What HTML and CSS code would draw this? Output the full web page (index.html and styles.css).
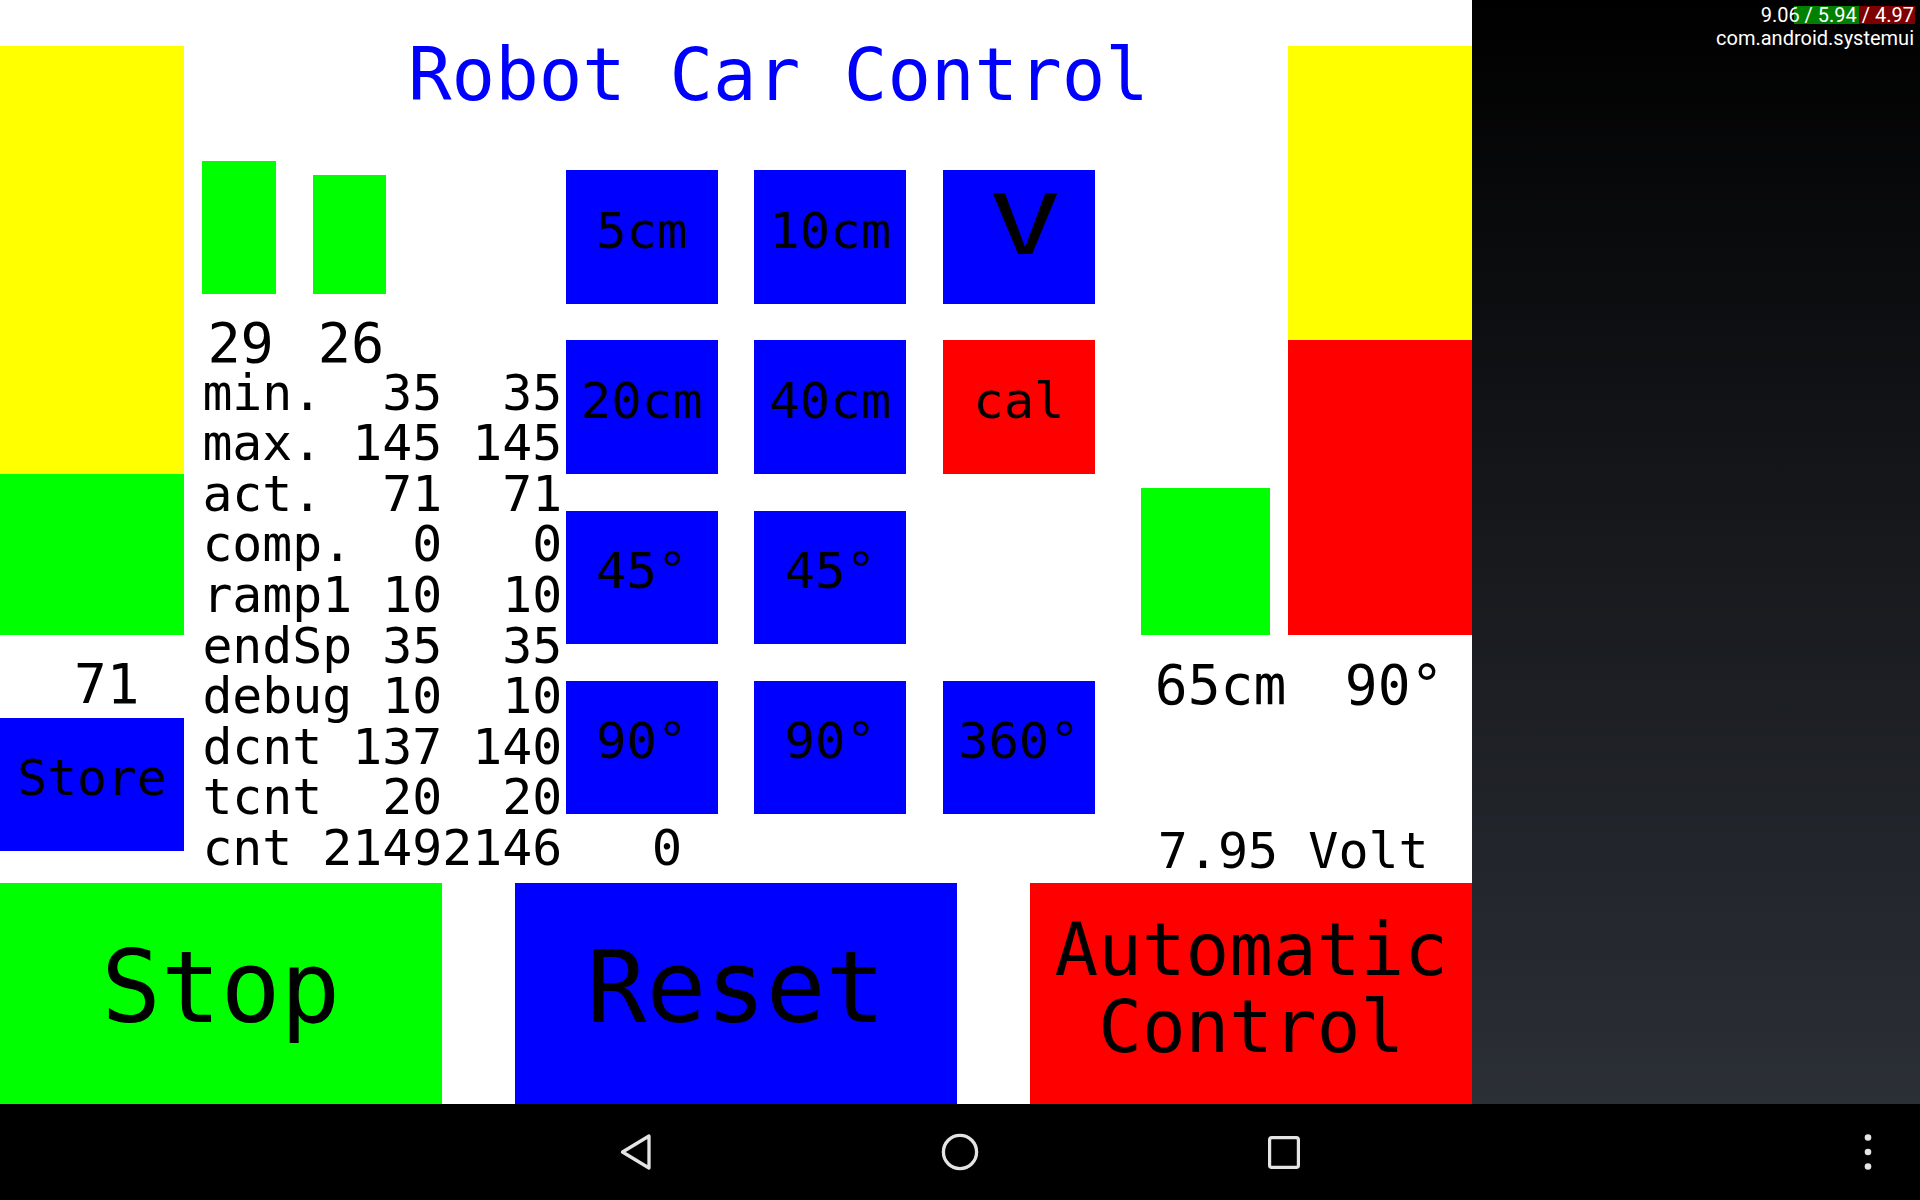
FILE: index.html
```html
<!DOCTYPE html>
<html lang="en">
<head>
<meta charset="utf-8">
<title>Robot Car Control</title>
<link rel="stylesheet" href="styles.css">
</head>
<body>
<div class="screen">
  <div class="top">
    <div class="app">
      <div class="main">
        <div class="col-left">
          <div class="yellow left-yellow"></div>
          <div class="green left-green"></div>
          <div class="speed-val">71</div>
          <div class="btn blue store">Store</div>
        </div>
        <div class="col-center">
          <div class="title">Robot Car Control</div>
          <div class="body">
            <div class="info">
              <div class="bars">
                <div class="bar green bar-l"></div>
                <div class="bar green bar-r"></div>
              </div>
              <div class="bar-vals"><span>29</span><span>26</span></div>
              <div class="table">min.  35  35
max. 145 145
act.  71  71
comp.  0   0
ramp1 10  10
endSp 35  35
debug 10  10
dcnt 137 140
tcnt  20  20
cnt 21492146</div>
            </div>
            <div class="controls">
              <div class="grid">
                <div class="btn blue">5cm</div>
                <div class="btn blue">10cm</div>
                <div class="btn blue v"><span>V</span></div>
                <div class="btn blue">20cm</div>
                <div class="btn blue">40cm</div>
                <div class="btn red">cal</div>
                <div class="btn blue">45°</div>
                <div class="btn blue">45°</div>
                <div class="cell-empty"></div>
                <div class="btn blue">90°</div>
                <div class="btn blue">90°</div>
                <div class="btn blue">360°</div>
              </div>
              <div class="cnt-extra">0</div>
            </div>
            <div class="dist">
              <div class="green dist-bar"></div>
              <div class="dist-vals"><span>65cm</span><span>90°</span></div>
              <div class="volt">7.95 Volt</div>
            </div>
          </div>
        </div>
        <div class="col-right">
          <div class="yellow right-yellow"></div>
          <div class="red right-red"></div>
        </div>
      </div>
      <div class="bottom">
        <div class="big green stop">Stop</div>
        <div class="big blue reset">Reset</div>
        <div class="big red auto">Automatic<br>Control</div>
      </div>
    </div>
    <div class="side">
      <div class="load-bar load-green"></div>
      <div class="load-bar load-red"></div>
      <div class="cpu">
        <div class="cpu-line">9.06 / 5.94 / 4.97</div>
        <div class="cpu-line">com.android.systemui</div>
      </div>
    </div>
  </div>
  <nav class="navbar">
    <div class="nav-keys">
      <div class="nav-key">
        <svg width="36" height="42" viewBox="0 0 36 42"><polygon points="4.5,21 31,5 31,37" fill="none" stroke="#e4e4e4" stroke-width="3.3" stroke-linejoin="round"/></svg>
      </div>
      <div class="nav-key">
        <svg width="40" height="40" viewBox="0 0 40 40"><circle cx="20" cy="20" r="16.6" fill="none" stroke="#e4e4e4" stroke-width="3.3"/></svg>
      </div>
      <div class="nav-key">
        <svg width="34" height="35" viewBox="0 0 34 35"><rect x="2.6" y="2.6" width="28.8" height="29.8" rx="2.2" fill="none" stroke="#e4e4e4" stroke-width="3.2"/></svg>
      </div>
    </div>
    <div class="nav-menu">
      <svg width="10" height="38" viewBox="0 0 10 38"><circle cx="5" cy="4.5" r="3.3" fill="#e4e4e4"/><circle cx="5" cy="19" r="3.3" fill="#e4e4e4"/><circle cx="5" cy="33.5" r="3.3" fill="#e4e4e4"/></svg>
    </div>
  </nav>
</div>
</body>
</html>
```

FILE: styles.css
```css
html, body {
  margin: 0;
  padding: 0;
  background: #000;
}

.screen {
  width: 1920px;
  height: 1200px;
  display: flex;
  flex-direction: column;
  overflow: hidden;
}

.top {
  display: flex;
  height: 1104px;
  flex: none;
}

.app {
  width: 1472px;
  height: 1104px;
  flex: none;
  background: #fff;
  display: flex;
  flex-direction: column;
  font-family: "DejaVu Sans Mono", "Liberation Mono", monospace;
  color: #000;
}

.yellow { background: #ffff00; }
.green { background: #00ff00; }
.blue { background: #0000ff; }
.red { background: #ff0000; }

.main {
  height: 883.2px;
  flex: none;
  display: flex;
}

/* left column */
.col-left {
  width: 184px;
  flex: none;
  padding-top: 46px;
  display: flex;
  flex-direction: column;
}
.left-yellow { height: 427.8px; flex: none; }
.left-green { height: 161px; flex: none; }
.speed-val {
  font-size: 54.4px;
  line-height: 55.2px;
  margin-top: 22.5px;
  padding-left: 74px;
  white-space: pre;
}
.btn {
  box-sizing: border-box;
  text-align: center;
  white-space: pre;
  font-size: 50.6px;
  line-height: 50.6px;
  padding-top: 35.5px;
}
.store {
  height: 133.4px;
  margin-top: 5.1px;
  flex: none;
  font-size: 49.6px;
  padding-top: 35px;
}

/* center column */
.col-center {
  width: 1104px;
  flex: none;
  display: flex;
  flex-direction: column;
}
.title {
  margin-top: 39.4px;
  height: 72.6px;
  font-size: 72.4px;
  line-height: 72.6px;
  color: #0000ff;
  padding-left: 224px;
  white-space: pre;
}
.body {
  display: flex;
  align-items: flex-start;
}

.info {
  width: 363.4px;
  margin-left: 18.4px;
  flex: none;
}
.bars {
  display: flex;
  align-items: flex-end;
  gap: 36.8px;
  margin-top: 49px;
  height: 133.4px;
}
.bar { width: 73.6px; flex: none; }
.bar-l { height: 133.4px; }
.bar-r { height: 119.6px; }
.bar-vals {
  display: flex;
  gap: 36.8px;
  font-size: 55.2px;
  line-height: 43.2px;
  margin-top: 27.6px;
  padding-left: 5px;
}
.bar-vals span { width: 73.6px; flex: none; }
.table {
  font-size: 49.8px;
  line-height: 50.6px;
  margin-top: 2.5px;
  white-space: pre;
}

.controls {
  width: 529px;
  flex: none;
  margin-top: 58.2px;
}
.grid {
  display: grid;
  grid-template-columns: repeat(3, 151.8px);
  grid-auto-rows: 133.4px;
  gap: 36.8px;
}
.v {
  font-size: 82.8px;
  line-height: 82.8px;
  padding-top: 15px;
}
.v span {
  display: inline-block;
  transform: translateX(-4.4px) scaleX(1.43);
  transform-origin: left center;
}
.cnt-extra {
  font-size: 50.6px;
  line-height: 50.6px;
  margin-top: 8.9px;
  padding-left: 86px;
}

.dist {
  width: 193.2px;
  flex: none;
  margin-top: 375.6px;
}
.dist-bar {
  margin-left: 46px;
  width: 128.8px;
  height: 147.2px;
}
.dist-vals {
  display: flex;
  gap: 58.5px;
  font-size: 54.6px;
  line-height: 55.2px;
  margin-top: 23.5px;
  padding-left: 60px;
  white-space: pre;
}
.dist-vals span { flex: none; }
.volt {
  font-size: 50px;
  line-height: 50.6px;
  margin-top: 112.7px;
  padding-left: 63px;
  white-space: pre;
}

/* right column */
.col-right {
  width: 184px;
  flex: none;
  padding-top: 46px;
}
.right-yellow { height: 294.4px; }
.right-red { height: 294.4px; }

/* bottom buttons */
.bottom {
  display: flex;
  gap: 73.6px;
  height: 220.8px;
  flex: none;
}
.big {
  width: 441.6px;
  flex: none;
  box-sizing: border-box;
  text-align: center;
}
.stop, .reset {
  font-size: 99.2px;
  line-height: 101.2px;
  padding-top: 53.6px;
}
.auto {
  font-size: 72.6px;
  line-height: 77.4px;
  padding-top: 28.4px;
}

/* right dark panel */
.side {
  flex: 1;
  position: relative;
  background: linear-gradient(to bottom, #000000 0%, #17191d 50%, #2b2f36 100%);
}
.load-bar {
  position: absolute;
  top: 5.7px;
  height: 18.6px;
}
.load-green {
  right: 61px;
  width: 65px;
  background: #007f00;
}
.load-red {
  right: 5px;
  width: 56px;
  background: #7f0000;
}
.cpu {
  position: absolute;
  top: 3.7px;
  right: 6px;
  font-family: Roboto, "Noto Sans", sans-serif;
  font-size: 20px;
  line-height: 23px;
  color: #fff;
  text-align: right;
}
.cpu-line {
  white-space: nowrap;
}

/* navigation bar */
.navbar {
  height: 96px;
  flex: none;
  background: #000;
  display: flex;
  align-items: center;
}
.nav-keys {
  display: flex;
  margin-left: 474px;
}
.nav-key {
  width: 324px;
  display: flex;
  justify-content: center;
  align-items: center;
}
.nav-key svg, .nav-menu svg { display: block; }
.nav-menu {
  margin-left: auto;
  width: 104px;
  display: flex;
  justify-content: center;
}
```
